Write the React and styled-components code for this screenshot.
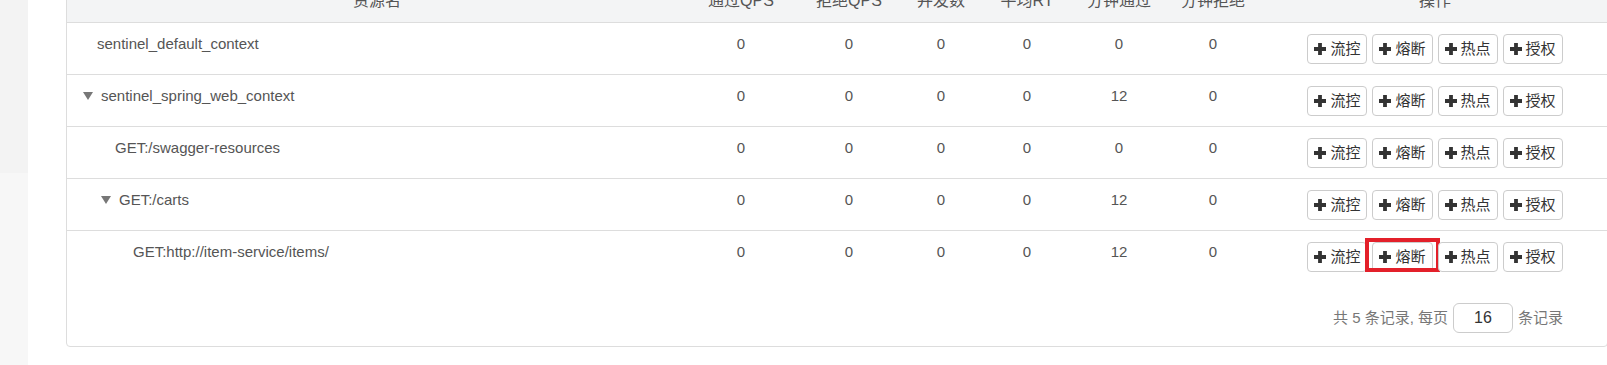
import React from "react";
import styled, { createGlobalStyle } from "styled-components";

const Global = createGlobalStyle`
  html, body { margin: 0; padding: 0; background: #fff; overflow: hidden; }
  body { font-family: "Liberation Sans", Arial, "Noto Sans CJK SC", sans-serif; }
  * { box-sizing: border-box; }
`;

const Page = styled.div`
  display: flex;
  height: 100vh;
  overflow: hidden;
`;

const Sidebar = styled.aside`
  width: 28px;
  flex: none;
  background: #f7f7f7;
  display: flex;
  flex-direction: column;
`;

const SideActive = styled.div`
  height: 173px;
  background: #f3f3f3;
`;

const Main = styled.main`
  flex: 1;
  padding-left: 38px;
  min-width: 0;
`;

const Panel = styled.section`
  margin-top: -21px;
  margin-right: -1px;
  border: 1px solid #ddd;
  border-radius: 4px;
  background: #fff;
`;

const COLS = "620px 108px 108px 76px 96px 88px 100px 1fr";

const HeadRow = styled.div`
  display: grid;
  grid-template-columns: ${COLS};
  background: #f3f4f5;
  border-radius: 4px 4px 0 0;
`;

const HeadCell = styled.div`
  padding: 10px 0;
  font-size: 16px;
  line-height: 22px;
  color: #555;
  text-align: center;
  white-space: nowrap;
`;

const Row = styled.div`
  display: grid;
  grid-template-columns: ${COLS};
  border-top: 1px solid #ddd;
`;

const Cell = styled.div`
  padding: 11px 0 10px;
  font-size: 15px;
  line-height: 20px;
  color: #555;
  text-align: center;
  white-space: nowrap;
`;

const NameCell = styled.div`
  display: flex;
  align-items: flex-start;
  padding: 11px 0 10px ${(p) => 16 + p.$level * 18}px;
  font-size: 15px;
  line-height: 20px;
  color: #555;
  white-space: nowrap;
`;

const Toggle = styled.span`
  width: 18px;
  height: 20px;
  flex: none;
  display: flex;
  align-items: center;
`;

const LeafSpace = styled.span`
  width: 14px;
  flex: none;
`;

const Actions = styled.div`
  display: flex;
  justify-content: center;
  gap: 5px;
  padding: 11px 0 10px;
`;

const ActionButton = styled.button`
  position: relative;
  display: inline-flex;
  align-items: center;
  gap: 4px;
  height: 30px;
  padding: 0 6px;
  border: 1px solid #ccc;
  border-radius: 4px;
  background: #fff;
  color: #333;
  font-family: "Liberation Sans", Arial, "Noto Sans CJK SC", sans-serif;
  font-size: 15px;
  line-height: 20px;
  cursor: pointer;
`;

const Highlight = styled.span`
  position: absolute;
  top: -5px;
  left: -8px;
  right: -8px;
  bottom: -1px;
  border: 4px solid #e3202a;
  pointer-events: none;
`;

const Footer = styled.div`
  display: flex;
  justify-content: flex-end;
  align-items: center;
  gap: 5px;
  padding: 21px 44px 13px 0;
  font-size: 15px;
  line-height: 20px;
  color: #777;
`;

const PageSize = styled.input`
  width: 60px;
  height: 30px;
  border: 1px solid #ccc;
  border-radius: 6px;
  text-align: center;
  font-family: "Liberation Sans", Arial, sans-serif;
  font-size: 16px;
  color: #333;
  background: #fff;
  outline: none;
  padding: 0;
`;

const PlusIcon = () => (
  <svg width="12" height="12" viewBox="0 0 12 12" aria-hidden="true">
    <path d="M4.1 0h3.8v4.1H12v3.8H7.9V12H4.1V7.9H0V4.1h4.1z" fill="#333" />
  </svg>
);

const Caret = () => (
  <svg width="10" height="8" viewBox="0 0 10 8" aria-hidden="true">
    <path d="M0 0h10L5 8z" fill="#777" />
  </svg>
);

const headers = ["资源名", "通过QPS", "拒绝QPS", "并发数", "平均RT", "分钟通过", "分钟拒绝", "操作"];

const rows = [
  { name: "sentinel_default_context", level: 0, parent: false, stats: [0, 0, 0, 0, 0, 0] },
  { name: "sentinel_spring_web_context", level: 0, parent: true, stats: [0, 0, 0, 0, 12, 0] },
  { name: "GET:/swagger-resources", level: 1, parent: false, stats: [0, 0, 0, 0, 0, 0] },
  { name: "GET:/carts", level: 1, parent: true, stats: [0, 0, 0, 0, 12, 0] },
  { name: "GET:http://item-service/items/", level: 2, parent: false, stats: [0, 0, 0, 0, 12, 0], mark: true },
];

const actions = ["流控", "熔断", "热点", "授权"];

export default function App() {
  return (
    <>
      <Global />
      <Page>
        <Sidebar>
          <SideActive />
        </Sidebar>
        <Main>
          <Panel>
            <HeadRow>
              {headers.map((h) => (
                <HeadCell key={h}>{h}</HeadCell>
              ))}
            </HeadRow>
            {rows.map((r) => (
              <Row key={r.name}>
                <NameCell $level={r.level}>
                  {r.parent ? (
                    <Toggle>
                      <Caret />
                    </Toggle>
                  ) : (
                    <LeafSpace />
                  )}
                  {r.name}
                </NameCell>
                {r.stats.map((s, i) => (
                  <Cell key={i}>{s}</Cell>
                ))}
                <Actions>
                  {actions.map((a) => (
                    <ActionButton key={a}>
                      <PlusIcon />
                      {a}
                      {r.mark && a === "熔断" ? <Highlight /> : null}
                    </ActionButton>
                  ))}
                </Actions>
              </Row>
            ))}
            <Footer>
              <span>共 5 条记录, 每页</span>
              <PageSize value="16" readOnly />
              <span>条记录</span>
            </Footer>
          </Panel>
        </Main>
      </Page>
    </>
  );
}
